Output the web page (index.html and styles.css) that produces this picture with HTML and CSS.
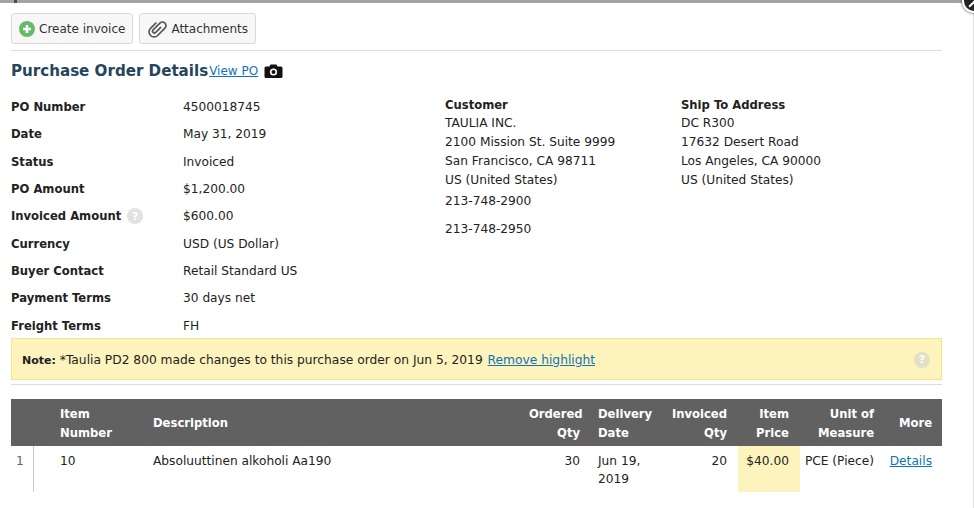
FILE: index.html
```html
<!DOCTYPE html>
<html lang="en">
<head>
<meta charset="utf-8">
<title>Purchase Order Details</title>
<link rel="stylesheet" href="styles.css">
</head>
<body>
<div class="modal">
  <span class="behind" aria-hidden="true"></span>
  <span class="close" aria-hidden="true"></span>
  <div class="toolbar">
    <button class="btn" type="button">
      <svg class="ico" viewBox="0 0 16 16" width="16" height="16"><circle cx="8" cy="8" r="8" fill="#66bb6a"/><path d="M8 4v8M4 8h8" stroke="#fff" stroke-width="2.6"/></svg>
      <span>Create invoice</span>
    </button>
    <button class="btn" type="button">
      <svg class="ico clip" viewBox="0 0 24 24" width="20" height="20"><path transform="rotate(45 12 12) translate(5 0)" d="M1 7v10a6 6 0 0 0 12 0V4.500a4.300 4.300 0 0 0-8.600 0V16a2.200 2.200 0 0 0 4.400 0V7" fill="none" stroke="#555" stroke-width="2"/></svg>
      <span>Attachments</span>
    </button>
  </div>
  <div class="heading">
    <h1>Purchase Order Details</h1>
    <a href="#" class="view">View PO</a>
    <svg class="cam" viewBox="0 0 18 14" width="19" height="14"><path d="M1.500 2.500h3.500l1-2h6l1 2h3.500a1.500 1.500 0 0 1 1.500 1.500v8.500a1.500 1.500 0 0 1-1.500 1.500h-15a1.500 1.500 0 0 1-1.500-1.500v-8.500a1.500 1.500 0 0 1 1.500-1.500z" fill="#111"/><circle cx="9" cy="8" r="3.600" fill="#fff"/><circle cx="9" cy="8" r="2" fill="#111"/></svg>
  </div>
  <div class="details">
    <dl class="facts">
      <dt>PO Number</dt><dd>4500018745</dd>
      <dt>Date</dt><dd>May 31, 2019</dd>
      <dt>Status</dt><dd>Invoiced</dd>
      <dt>PO Amount</dt><dd>$1,200.00</dd>
      <dt>Invoiced Amount <span class="help">?</span></dt><dd>$600.00</dd>
      <dt>Currency</dt><dd>USD (US Dollar)</dd>
      <dt>Buyer Contact</dt><dd>Retail Standard US</dd>
      <dt>Payment Terms</dt><dd>30 days net</dd>
      <dt>Freight Terms</dt><dd>FH</dd>
    </dl>
    <div class="addr customer">
      <strong>Customer</strong>
      <p>TAULIA INC.<br>2100 Mission St. Suite 9999<br>San Francisco, CA 98711<br>US (United States)</p>
      <p class="phone">213-748-2900</p>
      <p class="phone">213-748-2950</p>
    </div>
    <div class="addr">
      <strong>Ship To Address</strong>
      <p>DC R300<br>17632 Desert Road<br>Los Angeles, CA 90000<br>US (United States)</p>
    </div>
  </div>
  <div class="note">
    <span><b>Note:</b> *Taulia PD2 800 made changes to this purchase order on Jun 5, 2019 <a href="#">Remove highlight</a></span>
    <span class="help note-help">?</span>
  </div>
  <div class="items-wrap">
    <table class="items">
      <colgroup>
        <col class="c1"><col class="c2"><col class="c3"><col class="c4"><col class="c5"><col class="c6"><col class="c7"><col class="c8"><col class="c9">
      </colgroup>
      <thead>
        <tr>
          <th></th>
          <th class="l">Item<br>Number</th>
          <th class="l">Description</th>
          <th>Ordered<br>Qty</th>
          <th class="l">Delivery<br>Date</th>
          <th>Invoiced<br>Qty</th>
          <th>Item<br>Price</th>
          <th>Unit of<br>Measure</th>
          <th>More</th>
        </tr>
      </thead>
      <tbody>
        <tr>
          <td class="idx">1</td>
          <td class="l">10</td>
          <td class="l">Absoluuttinen alkoholi Aa190</td>
          <td>30</td>
          <td class="l">Jun 19,<br>2019</td>
          <td>20</td>
          <td class="hl">$40.00</td>
          <td class="nowrap">PCE (Piece)</td>
          <td class="more"><a href="#">Details</a></td>
        </tr>
      </tbody>
    </table>
  </div>
</div>
</body>
</html>
```
FILE: styles.css
```css
* { box-sizing: border-box; }
html, body { margin: 0; padding: 0; }
body {
  width: 974px;
  height: 508px;
  overflow: hidden;
  background: #fff;
  font-family: "DejaVu Sans", sans-serif;
  font-size: 12.2px;
  color: #222;
}
a { color: #0f75b5; }
b, strong, dt { font-size: 11.6px; }
.modal {
  position: relative;
  height: 508px;
  padding: 10px 31px 0 11px;
  border-top: 3px solid #a3a3a3;
  border-right: 1px solid #ddd;
}
.behind {
  position: absolute;
  top: -3px;
  left: 14px;
  width: 3px;
  height: 3px;
  background: #3d5261;
}
.close {
  position: absolute;
  top: -14px;
  right: -13px;
  width: 24px;
  height: 24px;
  border-radius: 50%;
  background: #222;
  border: 2px solid #fff;
  box-shadow: 0 0 3px #444;
}
.close::after {
  content: "";
  position: absolute;
  top: 9px;
  left: 7px;
  width: 2px;
  height: 8px;
  background: #fff;
  transform: rotate(45deg);
}
.toolbar {
  display: flex;
  gap: 6px;
  padding-bottom: 6px;
  border-bottom: 1px solid #ddd;
}
.btn {
  display: flex;
  align-items: center;
  gap: 4px;
  height: 31px;
  padding: 1px 7px 0 7px;
  border: 1px solid #d9d9d9;
  border-radius: 3px;
  background: #f7f7f7;
  font: inherit;
  font-size: 12px;
  color: #333;
}
.ico { margin-top: -1px; }
.heading {
  display: flex;
  align-items: center;
  height: 40px;
}
h1 {
  margin: 0;
  font-size: 15.1px;
  font-weight: bold;
  color: #24455b;
}
.view { font-size: 12px; margin-left: 1px; }
.cam { margin-left: 6px; }
.details { display: flex; height: 247px; }
.facts {
  width: 434px;
  margin: 0;
  display: grid;
  grid-template-columns: 172px 1fr;
  grid-auto-rows: 27.3px;
  align-items: center;
  padding-top: 2.500px;
}
.facts dt { font-weight: bold; display: flex; align-items: center; gap: 6px; }
.facts dd { margin: 0; }
.help {
  display: inline-flex;
  align-items: center;
  justify-content: center;
  width: 16px;
  height: 16px;
  border-radius: 50%;
  background: #e2e2e2;
  color: #fff;
  font-size: 11px;
  font-weight: bold;
}
.addr { width: 236px; line-height: 18.8px; padding-top: 4.500px; }
.addr strong { display: block; }
.addr p { margin: 0; }
.addr .phone { margin-top: 3px; }
.addr .phone + .phone { margin-top: 9px; }
.note {
  display: flex;
  align-items: center;
  justify-content: space-between;
  height: 42px;
  padding: 1px 11px 0 10px;
  font-size: 12.26px;
  background: #fdf3bd;
  border: 1px solid #f8e38c;
}
.note b { font-size: 11px; }
.note a { margin-left: 1px; }
.note-help { background: #e4e0c4; margin-right: 0; }
.items-wrap {
  margin-top: 4px;
  padding-top: 14px;
  border-top: 1px solid #ddd;
}
.items {
  width: 931px;
  border-collapse: separate;
  border-spacing: 0;
  table-layout: fixed;
}
.c1 { width: 23px; }
.c2 { width: 109px; }
.c3 { width: 382px; }
.c4 { width: 65px; }
.c5 { width: 75px; }
.c6 { width: 73px; }
.c7 { width: 62px; }
.c8 { width: 84px; }
.c9 { width: 58px; }
.items th {
  height: 47px;
  background: #616161;
  color: #fff;
  font-size: 11.6px;
  font-weight: bold;
  line-height: 19px;
  text-align: right;
  padding: 2px 10px 0 4px;
  vertical-align: middle;
}
.items td {
  height: 46px;
  text-align: right;
  vertical-align: top;
  padding: 6px 10px 0 4px;
  line-height: 18px;
}
.items .l { text-align: left; padding-left: 8px; }
.items th:nth-child(2), .items td:nth-child(2) { padding-left: 26px; }
.items th:nth-child(3), .items td:nth-child(3) { padding-left: 10px; }
.items th:nth-child(6), .items td:nth-child(6) { padding-right: 11px; }
.items th:nth-child(7), .items td:nth-child(7) { padding-right: 11px; }
.items .idx { text-align: left; padding-left: 5px; color: #666; border-right: 1px solid #ccc; }
.items .hl { background: #fdf3bd; }
.items .nowrap { white-space: nowrap; }
```
